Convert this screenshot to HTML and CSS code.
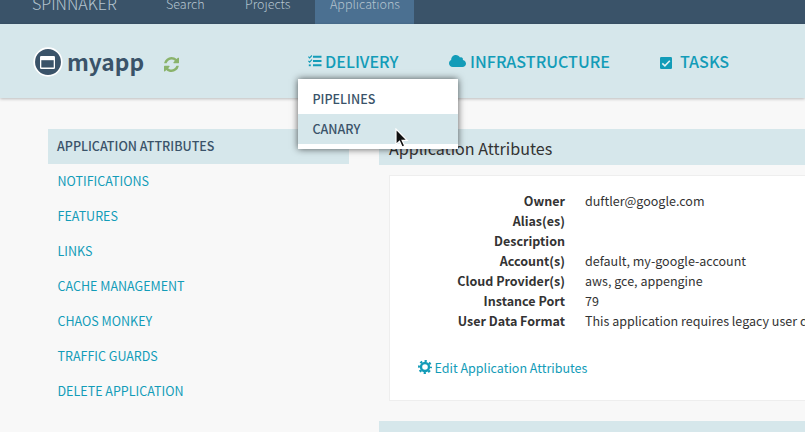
FILE: index.html
```html
<!DOCTYPE html>
<html lang="en">
<head>
<meta charset="utf-8">
<title>myapp</title>
<link rel="stylesheet" href="styles.css">
</head>
<body>
<nav class="topbar">
  <a class="brand"><span>SPINNAKER</span></a>
  <a class="top-link search"><span>Search</span></a>
  <a class="top-link projects"><span>Projects</span></a>
  <a class="top-link active"><span>Applications</span></a>
</nav>
<header class="app-header">
  <div class="app-title">
    <svg class="app-icon" viewBox="0 0 30 30"><circle cx="15" cy="15" r="13.800" fill="#3a5369" stroke="#fff" stroke-width="1.700"/><rect x="7" y="9" width="15" height="13" rx="1.200" fill="#fff"/><rect x="8.300" y="13.200" width="12.400" height="7.300" fill="#3a5369"/></svg>
    <h1><span>myapp</span></h1>
    <svg class="refresh" viewBox="0 0 1536 1536"><path fill="#8ab36b" d="M1511 928q0 5-1 7-64 268-268 434.500T764 1536q-146 0-282.500-55T238 1324l-129 129q-19 19-45 19t-45-19-19-45V960q0-26 19-45t45-19h448q26 0 45 19t19 45-19 45l-137 137q71 66 161 102t187 36q134 0 250-65t186-179q11-17 53-117 8-23 30-23h192q13 0 22.500 9.500t9.500 22.500zm25-800v448q0 26-19 45t-45 19h-448q-26 0-45-19t-19-45 19-45l138-138Q969 256 768 256q-134 0-250 65T332 500q-11 17-53 117-8 23-30 23H50q-13 0-22.500-9.500T18 608v-7q65-268 270-434.500T768 0q146 0 284 55.500T1297 212l130-129q19-19 45-19t45 19 19 45z"/></svg>
  </div>
  <div class="app-nav">
    <a class="nav-item delivery">
      <svg class="i-list" viewBox="0 0 14 12"><g fill="none" stroke="#139cb8"><path stroke-width="1.9" d="M5 1.800h8.500M5 6h8.500M5 10.200h8.500"/><path stroke-width="1.100" d="M.4 1.700l1.200 1.200L3.900.5M.4 5.900l1.200 1.200L3.900 4.700"/><path stroke-width="1.800" d="M.8 10.300h2"/></g></svg><span>DELIVERY</span>
    </a>
    <a class="nav-item infra">
      <svg class="i-cloud" viewBox="0 0 17 12"><path fill="#139cb8" d="M3.800 12C1.700 12 0 10.400 0 8.300c0-1.500.9-2.800 2.200-3.400C2.100 2.200 4.100 0 6.800 0c1.900 0 3.400 1 4.200 2.600 1.700-.8 3.300.5 2.900 2.300C15.700 5.300 17 6.800 17 8.500c0 2-1.600 3.500-3.500 3.500z"/></svg><span>INFRASTRUCTURE</span>
    </a>
    <a class="nav-item tasks">
      <svg class="i-check" viewBox="0 0 12 12"><rect width="12" height="12" rx="1.200" fill="#139cb8"/><path d="M2.300 6.300l2.600 2.500 4.900-5" fill="none" stroke="#e4f1f3" stroke-width="1.600"/></svg><span>TASKS</span>
    </a>
  </div>
  <div class="dropdown">
    <a><span>PIPELINES</span></a>
    <a class="hover"><span>CANARY</span></a>
  </div>
</header>
<svg class="cursor" viewBox="0 0 14 20"><path d="M1 1v15.500l3.500-3.200 2.600 5.700 2.600-1.200-2.600-5.500h5z" fill="#111" stroke="#fff" stroke-width="1.200"/></svg>
<main class="content">
  <nav class="sidebar">
    <a class="selected"><span>APPLICATION ATTRIBUTES</span></a>
    <a><span>NOTIFICATIONS</span></a>
    <a><span>FEATURES</span></a>
    <a><span>LINKS</span></a>
    <a><span>CACHE MANAGEMENT</span></a>
    <a><span>CHAOS MONKEY</span></a>
    <a><span>TRAFFIC GUARDS</span></a>
    <a><span>DELETE APPLICATION</span></a>
  </nav>
  <div class="sections">
    <h2><span>Application Attributes</span></h2>
    <section class="panel">
      <dl>
        <dt>Owner</dt><dd>duftler@google.com</dd>
        <dt>Alias(es)</dt><dd></dd>
        <dt>Description</dt><dd></dd>
        <dt>Account(s)</dt><dd>default, my-google-account</dd>
        <dt>Cloud Provider(s)</dt><dd>aws, gce, appengine</dd>
        <dt>Instance Port</dt><dd>79</dd>
        <dt>User Data Format</dt><dd>This application requires legacy user data</dd>
      </dl>
      <a class="edit">
        <svg viewBox="0 0 14 14"><g fill="none" stroke="#139cb8"><circle cx="7" cy="7" r="4" stroke-width="2.400"/><circle cx="7" cy="7" r="6" stroke-width="2" stroke-dasharray="2.300 2.412" stroke-dashoffset="1.150"/></g></svg><span>Edit Application Attributes</span>
      </a>
    </section>
    <h2></h2>
  </div>
</main>
</body>
</html>
```
FILE: styles.css
```css
* { box-sizing: border-box; }
body {
  margin: 0;
  width: 805px;
  height: 432px;
  overflow: hidden;
  background: #f8f8f8;
  color: #333;
  font-family: "Noto Sans CJK SC", "Open Sans", sans-serif;
  font-size: 12.53px;
  line-height: 20px;
}
h1, h2, dl, dd { margin: 0; font-weight: 400; }
svg { display: block; flex: none; }
a, h1, h2, dt, dd { white-space: nowrap; }

.topbar {
  display: flex;
  height: 24px;
  background: #3a5369;
  color: #b5c4cf;
  font-weight: 300;
  line-height: 20px;
}
.topbar span { display: block; margin-top: -6px; }
.brand { width: 151px; padding-left: 32px; font-size: 16.1px; }
.brand span { margin-top: -7px; }
.top-link { padding-left: 15px; }
.search { width: 79px; }
.projects { width: 85px; }
.active { width: 99px; background: #4b7091; }

.app-header {
  position: relative;
  display: flex;
  align-items: center;
  height: 74px;
  padding-left: 33px;
  background: #d6e7eb;
  box-shadow: 0 1px 3px rgba(0, 0, 0, .25);
}
.app-title { display: flex; align-items: center; width: 275px; color: #3a5369; }
.app-icon { width: 30px; height: 30px; margin-top: 2px; }
h1 { margin: 2px 0 0 4px; font-size: 22.7px; font-weight: 600; line-height: 30px; }
.refresh { width: 15px; height: 15px; margin: 6px 0 0 20px; }
.app-nav { display: flex; color: #139cb8; font-size: 16.1px; font-weight: 500; }
.nav-item { display: flex; align-items: center; height: 20px; }
.delivery { width: 141px; }
.infra { width: 211px; }
.i-list { width: 14px; height: 12px; margin-right: 3px; }
.i-cloud { width: 17px; height: 12px; margin-right: 4px; }
.i-check { width: 12px; height: 12px; margin: 4px 8px 0 0; }

.dropdown {
  position: absolute;
  z-index: 2;
  left: 298px;
  top: 55px;
  width: 160px;
  height: 70px;
  padding: 5px 0;
  background: #fff;
  box-shadow: 0 0 7px rgba(0, 0, 0, .65);
  color: #3a5369;
  font-weight: 500;
}
.dropdown a { display: block; height: 30px; padding: 5px 14.500px; }
.dropdown .hover { background: #d6e7eb; }
.cursor { position: absolute; z-index: 3; left: 394.500px; top: 128px; width: 14px; height: 20px; }

.content { display: flex; gap: 30px; height: 334px; padding: 31px 0 0 48px; overflow: hidden; }
.sidebar { flex: none; width: 301px; color: #139cb8; }
.sidebar a { display: block; height: 35px; padding: 7px 9.500px; }
.sidebar .selected { padding-left: 9px; background: #d6e7eb; color: #3a5369; font-weight: 500; }
.sections { flex: 1; min-width: 0; }
h2 { height: 36px; padding: 9px 10px; background: #d6e7eb; font-size: 16.1px; line-height: 20px; }
.panel {
  height: 226px;
  margin: 10px 0 20px 10px;
  padding: 15px 0 0 28px;
  border: 1px solid #eee;
  border-right: 0;
  background: #fff;
}
dl { display: grid; grid-template-columns: 147px 1fr; column-gap: 20px; grid-auto-rows: 20px; }
dt { text-align: right; font-weight: 700; }
.edit { display: flex; align-items: center; margin-top: 27px; color: #139cb8; }
.edit svg { width: 14px; height: 14px; margin: -2px 2.500px 0 0; }
```
